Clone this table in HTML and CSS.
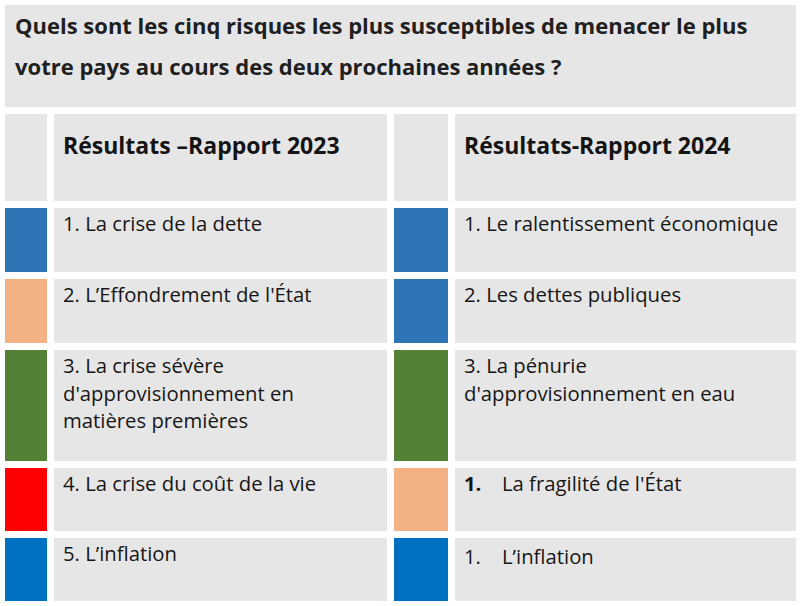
FILE: index.html
```html
<!DOCTYPE html>
<html lang="fr">
<head>
<meta charset="utf-8">
<link rel="stylesheet" href="styles.css">
</head>
<body>
<div class="page">
  <div class="question">
    <p>Quels sont les cinq risques les plus susceptibles de menacer le plus<br>votre pays au cours des deux prochaines années ?</p>
  </div>
  <div class="table">
    <div class="sw"></div>
    <div class="cell head">Résultats –Rapport 2023</div>
    <div class="sw"></div>
    <div class="cell head">Résultats-Rapport 2024</div>

    <div class="sw blue"></div>
    <div class="cell">1. La crise de la dette</div>
    <div class="sw blue"></div>
    <div class="cell">1. Le ralentissement économique</div>

    <div class="sw peach"></div>
    <div class="cell">2. L’Effondrement de l'État</div>
    <div class="sw blue"></div>
    <div class="cell">2. Les dettes publiques</div>

    <div class="sw green"></div>
    <div class="cell">3. La crise sévère<br>d'approvisionnement en<br>matières premières</div>
    <div class="sw green"></div>
    <div class="cell">3. La pénurie<br>d'approvisionnement en eau</div>

    <div class="sw red"></div>
    <div class="cell">4. La crise du coût de la vie</div>
    <div class="sw peach"></div>
    <div class="cell list"><span class="num bold">1.</span><span>La fragilité de l'État</span></div>

    <div class="sw blue2"></div>
    <div class="cell">5. L’inflation</div>
    <div class="sw blue2"></div>
    <div class="cell list low"><span class="num">1.</span><span>L’inflation</span></div>
  </div>
</div>
</body>
</html>
```
FILE: styles.css
```css
html, body {
  margin: 0;
  padding: 0;
  background: #ffffff;
}
.page {
  width: 800px;
  height: 606px;
  box-sizing: border-box;
  padding: 5px 4px 5px 5px;
  display: flex;
  flex-direction: column;
  gap: 7px;
}
.question {
  background: #e7e6e6;
  height: 102px;
  box-sizing: border-box;
  padding: 0 10px;
}
.question p {
  margin: 0;
  font-family: "Open Sans", "Noto Sans", sans-serif;
  font-weight: 700;
  font-size: 22px;
  line-height: 41px;
  color: #1f1f1f;
}
.table {
  display: grid;
  grid-template-columns: 42px 333px 54px 1fr;
  grid-template-rows: 87px 64px 64px 111px 63px 63px;
  column-gap: 7px;
  row-gap: 7px;
}
.sw { background: #e7e6e6; }
.blue { background: #2e75b6; }
.blue2 { background: #0070c0; }
.peach { background: #f4b183; }
.green { background: #538135; }
.red { background: #ff0000; }
.cell {
  background: #e7e6e6;
  font-family: "Open Sans", "Noto Sans", sans-serif;
  font-size: 20.3px;
  line-height: 27.5px;
  color: #161616;
  padding: 2px 9px 0 9px;
}
.cell.head {
  font-weight: 700;
  font-size: 23px;
  line-height: 30px;
  padding-top: 16px;
  color: #141414;
}
.list {
  display: flex;
}
.list .num {
  width: 38px;
  flex: none;
}
.list.low { padding-top: 5px; }
.bold { font-weight: 700; }
```
